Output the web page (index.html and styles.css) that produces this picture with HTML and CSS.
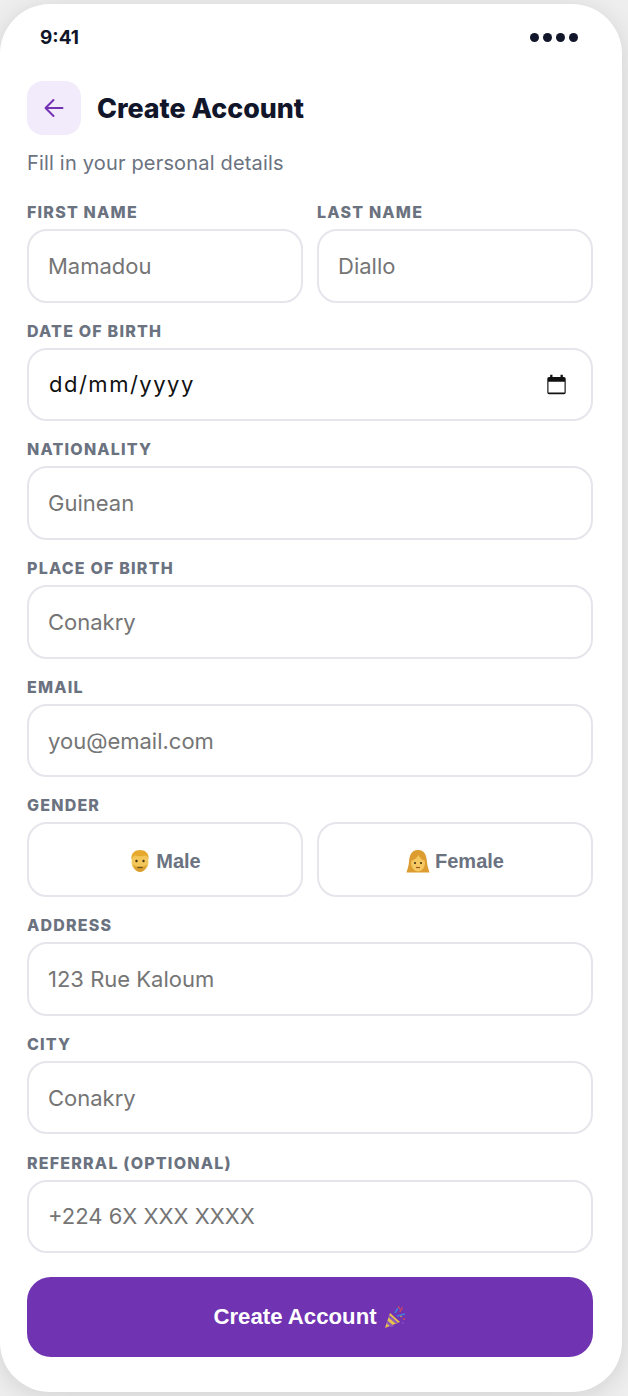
FILE: index.html
```html
<!DOCTYPE html>
<html lang="en">
<head>
<meta charset="utf-8">
<title>Create Account</title>
<link rel="stylesheet" href="styles.css">
</head>
<body>
<main class="phone">
  <div class="status">
    <span class="time">9:41</span>
    <span class="dots"><i></i><i></i><i></i><i></i></span>
  </div>
  <header class="head">
    <button class="back" type="button" aria-label="Back">
      <svg width="24" height="24" viewBox="0 0 24 24" fill="none" stroke="#7332b4" stroke-width="2" stroke-linecap="round" stroke-linejoin="round"><path d="M20.500 12H3.500M11.500 4l-8 8 8 8"/></svg>
    </button>
    <h1>Create Account</h1>
  </header>
  <p class="sub">Fill in your personal details</p>
  <form class="form">
    <div class="two">
      <div class="field"><div class="label">FIRST NAME</div><div class="input">Mamadou</div></div>
      <div class="field"><div class="label">LAST NAME</div><div class="input">Diallo</div></div>
    </div>
    <div class="field"><div class="label">DATE OF BIRTH</div>
      <div class="input date"><span>dd/mm/yyyy</span>
        <svg width="23" height="23" viewBox="0 0 20 20"><path d="M4.500 1.500h2v2h7v-2h2v2h1a1.500 1.500 0 0 1 1.500 1.500v12a1.500 1.500 0 0 1-1.500 1.500h-13a1.500 1.500 0 0 1-1.500-1.500v-12a1.500 1.500 0 0 1 1.500-1.500h1zM3 7.500v9.500h14v-9.500z" fill="#111"/></svg>
      </div></div>
    <div class="field"><div class="label">NATIONALITY</div><div class="input">Guinean</div></div>
    <div class="field"><div class="label">PLACE OF BIRTH</div><div class="input">Conakry</div></div>
    <div class="field"><div class="label">EMAIL</div><div class="input">you@email.com</div></div>
    <div class="field"><div class="label">GENDER</div>
      <div class="two">
        <button class="choice" type="button">
          <svg width="22" height="24" viewBox="0 0 22 24"><ellipse cx="11" cy="13" rx="8.500" ry="10" fill="#f3c65a"/><path d="M2.500 11C1.500 4 6 1 11 1s9.500 3 8.500 10c-1-3-2-4-3-4.500-3 1-8 1-10.500 0-1.500 1-2.500 2-3.500 4.500z" fill="#e5a92e"/><path d="M4 15c1 5 4 8 7 8s6-3 7-8c-1 2-3 2.500-4 2.500h-6c-1 0-3-.5-4-2.500z" fill="#d9a031"/><circle cx="7.500" cy="12" r="1.200" fill="#4a3418"/><circle cx="14.500" cy="12" r="1.200" fill="#4a3418"/><path d="M8.500 18.500h5" stroke="#6b4a1c" stroke-width="1.200"/></svg>
          Male</button>
        <button class="choice" type="button">
          <svg width="24" height="24" viewBox="0 0 24 24"><path d="M12 1C5 1 3.500 7 3 13c-.3 4-1.500 7-2.500 10.500h23C22.500 20 21.300 17 21 13 20.500 7 19 1 12 1z" fill="#dd9c30"/><ellipse cx="12" cy="14" rx="7" ry="8.500" fill="#f5c862"/><path d="M5 12c3-1 6-3 7.500-6 1 3 3.500 5 6.500 6-.5-4-3-8-7-8s-6.500 4-7 8z" fill="#dd9c30"/><circle cx="9" cy="14" r="1.100" fill="#4a3418"/><circle cx="15" cy="14" r="1.100" fill="#4a3418"/><path d="M10 18.500h4" stroke="#a3561f" stroke-width="1.200"/></svg>
          Female</button>
      </div></div>
    <div class="field"><div class="label">ADDRESS</div><div class="input">123 Rue Kaloum</div></div>
    <div class="field"><div class="label">CITY</div><div class="input">Conakry</div></div>
    <div class="field"><div class="label">REFERRAL (OPTIONAL)</div><div class="input">+224 6X XXX XXXX</div></div>
    <button class="submit" type="button">Create Account
      <svg width="24" height="24" viewBox="0 0 24 24"><path d="M2 23l5-15 10 9z" fill="#eac24a"/><path d="M4.500 15.500l6.500 5.500-3 1-4.500-3.500zM6.500 10l8.500 7.500-2.500 1-7-6z" fill="#8c5bb8"/><path d="M12 8l3-5M14 11l8-2" stroke="#3f7fd9" stroke-width="1.500" fill="none"/><path d="M15 1.500l2 2M19 2c1 2-2 3-2 5" stroke="#d6455a" stroke-width="1.300" fill="none"/><circle cx="21" cy="14" r="1" fill="#d6455a"/><circle cx="18" cy="11.500" r=".8" fill="#e89a3c"/><circle cx="20" cy="18" r=".8" fill="#8c5bb8"/></svg>
    </button>
  </form>
</main>
</body>
</html>
```
FILE: styles.css
```css
* { box-sizing: border-box; }
html, body { margin: 0; height: 100%; }
body {
  width: 628px;
  height: 1396px;
  overflow: hidden;
  padding: 4px 6px 4px 0;
  background: #eeeeee;
  font-family: Inter, "Noto Sans", sans-serif;
}
.phone {
  width: 622px;
  height: 1388px;
  background: #fff;
  border-radius: 50px;
  padding: 20px 29px 0 27px;
  box-shadow: 0 4px 24px rgba(0, 0, 0, 0.12);
}
.status {
  display: flex;
  justify-content: space-between;
  align-items: center;
  height: 26px;
  padding: 0 15px 0 13px;
}
.time { font-size: 19px; font-weight: 700; color: #11162a; }
.dots { display: flex; gap: 4px; }
.dots i { width: 9px; height: 9px; border-radius: 50%; background: #11162a; }
.head { display: flex; align-items: center; gap: 16px; margin-top: 31px; }
.back {
  width: 54px; height: 54px; border: 0; padding: 0;
  border-radius: 16px; background: #f2ebfb;
  display: flex; align-items: center; justify-content: center;
}
h1 { margin: 0; font-size: 26.800px; font-weight: 800; color: #11162a; }
.sub { margin: 16px 0 0; font-size: 20px; line-height: 24px; color: #6b7280; letter-spacing: 0.18px; }
.form { margin-top: 28px; display: flex; flex-direction: column; gap: 19.200px; }
.two { display: grid; grid-template-columns: 1fr 1fr; gap: 14px; }
.label {
  font-size: 16px; line-height: 19px; font-weight: 800;
  letter-spacing: 1.200px; color: #6b7280; margin-bottom: 7px;
}
.input {
  height: 73.500px; border: 2px solid #e5e5ec; border-radius: 20px;
  padding: 0 19px; display: flex; align-items: center;
  font-size: 22px; color: #757575; background: #fff;
}
.date { justify-content: space-between; color: #111; padding: 0 23px 0 20px; letter-spacing: 1.500px; }
.choice {
  height: 74.500px; border: 2px solid #e5e5ec; border-radius: 20px; background: #fff;
  display: flex; align-items: center; justify-content: center; gap: 5px;
  font: 700 20px "Liberation Sans", Arial, sans-serif; color: #6b7280;
  padding: 3px 0 0;
}
.submit {
  height: 80px; margin-top: 4.700px; border: 0; border-radius: 24px;
  background: #7033b2; color: #fff;
  font: 700 22.200px "Liberation Sans", Arial, sans-serif;
  display: flex; align-items: center; justify-content: center; gap: 6px;
  padding: 1px 0 0;
}
```
